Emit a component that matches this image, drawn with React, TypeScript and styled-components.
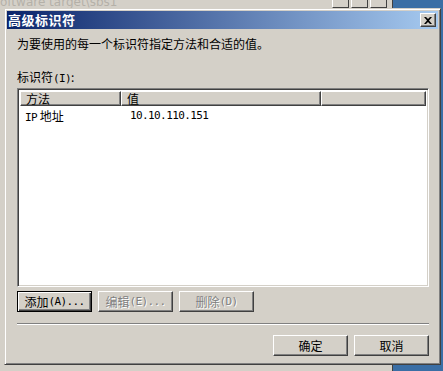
import React from 'react';
import styled, { createGlobalStyle } from 'styled-components';

const GlobalStyle = createGlobalStyle`
  html, body {
    margin: 0;
    padding: 0;
    background: #3a6ea5;
  }
  body {
    font-family: "Noto Sans CJK SC", "DejaVu Sans", sans-serif;
    font-size: 12px;
    color: #000;
  }
`;

const Desktop = styled.div`
  position: relative;
  width: 443px;
  height: 371px;
  overflow: hidden;
  background: #3a6ea5;
`;

// window behind the dialog
const BackWindow = styled.div`
  width: 392px;
  height: 371px;
  background: #d4d0c8;
  border-right: 1px solid #404040;
  display: flex;
  flex-direction: column;
`;

const BackTitle = styled.div`
  height: 8px;
  display: flex;
  align-items: flex-start;
  justify-content: space-between;
  background: #d4d0c8;
  overflow: hidden;
`;

const BackTitleText = styled.span`
  font-family: "DejaVu Sans", sans-serif;
  font-size: 12px;
  line-height: 12px;
  margin-top: -4px;
  color: #b4b0a8;
  white-space: nowrap;
`;

const BackButtons = styled.div`
  display: flex;
  gap: 2px;
  padding-right: 5px;
`;

const BackButton = styled.div`
  width: 15px;
  height: 7px;
  background: #d4d0c8;
  border-left: 1px solid #fff;
  border-right: 1px solid #404040;
  border-bottom: 1px solid #404040;
`;

const Dialog = styled.div`
  position: absolute;
  left: 4px;
  top: 8px;
  width: 437px;
  height: 357px;
  box-sizing: border-box;
  background: #d4d0c8;
  border-top: 1px solid #d4d0c8;
  border-left: 1px solid #d4d0c8;
  border-right: 1px solid #404040;
  border-bottom: 1px solid #404040;
  box-shadow: inset 1px 1px 0 #fff, inset -1px -1px 0 #808080;
  padding: 2px;
  display: flex;
  flex-direction: column;
`;

const TitleBar = styled.div`
  height: 18px;
  display: flex;
  align-items: center;
  justify-content: space-between;
  background: linear-gradient(to right, #0a246a, #a6caf0);
  padding: 0 2px 0 1px;
`;

const TitleText = styled.span`
  color: #fff;
  font-weight: bold;
  font-size: 13px;
  letter-spacing: 0.5px;
  line-height: 18px;
`;

const CloseButton = styled.div`
  width: 16px;
  height: 14px;
  box-sizing: border-box;
  background: #d4d0c8;
  border-top: 1px solid #fff;
  border-left: 1px solid #fff;
  border-right: 1px solid #404040;
  border-bottom: 1px solid #404040;
  box-shadow: inset -1px -1px 0 #808080;
  display: flex;
  align-items: center;
  justify-content: center;
`;

const Body = styled.div`
  flex: 1;
  display: flex;
  flex-direction: column;
  padding: 0 9px 0 10px;
`;

const Description = styled.div`
  margin-top: 7px;
  line-height: 16px;
`;

const Label = styled.div`
  margin-top: 17px;
  line-height: 16px;
`;

const ListBox = styled.div`
  margin-top: 1px;
  height: 199px;
  box-sizing: border-box;
  background: #fff;
  border-top: 1px solid #808080;
  border-left: 1px solid #808080;
  border-right: 1px solid #fff;
  border-bottom: 1px solid #fff;
  box-shadow: inset 1px 1px 0 #404040, inset -1px -1px 0 #d4d0c8;
  padding: 2px;
  display: flex;
  flex-direction: column;
`;

const HeaderRow = styled.div`
  display: flex;
  height: 15px;
`;

const HeaderCell = styled.div<{ $width?: number }>`
  ${({ $width }) => ($width ? `width: ${$width}px;` : 'flex: 1;')}
  box-sizing: border-box;
  background: #d4d0c8;
  border-top: 1px solid #fff;
  border-left: 1px solid #fff;
  border-right: 1px solid #404040;
  border-bottom: 1px solid #404040;
  box-shadow: inset -1px -1px 0 #808080;
  padding-left: 5px;
  line-height: 13px;
  overflow: hidden;
`;

const DataRow = styled.div`
  display: flex;
  margin-top: 2px;
  height: 16px;
  line-height: 16px;
`;

const DataCell = styled.div<{ $width?: number; $mono?: boolean }>`
  ${({ $width }) => ($width ? `width: ${$width}px;` : 'flex: 1;')}
  padding-left: ${({ $mono }) => ($mono ? '4px' : '5px')};
  font-family: ${({ $mono }) =>
    $mono ? '"DejaVu Sans Mono", "Liberation Mono", monospace' : 'inherit'};
  font-size: ${({ $mono }) => ($mono ? '11px' : '12px')};
  letter-spacing: ${({ $mono }) => ($mono ? '-0.6px' : '0')};
  white-space: nowrap;
`;

const ButtonRow = styled.div<{ $end?: boolean }>`
  display: flex;
  gap: 6px;
  justify-content: ${({ $end }) => ($end ? 'flex-end' : 'flex-start')};
`;

const Button = styled.div<{ $default?: boolean; $disabled?: boolean }>`
  width: 75px;
  height: 21px;
  box-sizing: border-box;
  background: #d4d0c8;
  display: flex;
  align-items: center;
  justify-content: center;
  line-height: 16px;
  color: ${({ $disabled }) => ($disabled ? '#808080' : '#000')};
  text-shadow: ${({ $disabled }) => ($disabled ? '1px 1px 0 #fff' : 'none')};
  border: 1px solid;
  border-color: ${({ $default }) =>
    $default ? '#000' : '#fff #404040 #404040 #fff'};
  box-shadow: ${({ $default }) =>
    $default
      ? 'inset 1px 1px 0 #fff, inset -1px -1px 0 #404040, inset -2px -2px 0 #808080'
      : 'inset -1px -1px 0 #808080'};
`;

const Separator = styled.div`
  margin-top: 11px;
  height: 0;
  border-top: 1px solid #808080;
  border-bottom: 1px solid #fff;
`;

const Gap = styled.div<{ $h: number }>`
  height: ${({ $h }) => $h}px;
`;

const Shortcut = styled.span`
  font-family: "DejaVu Sans Mono", "Liberation Mono", monospace;
  font-size: 11px;
  letter-spacing: -0.6px;
`;

const CloseIcon = () => (
  <svg width="8" height="7" viewBox="0 0 8 7">
    <path d="M0 0h2l2 2 2-2h2L5 3.5 8 7H6L4 5 2 7H0l3-3.5z" fill="#000" />
  </svg>
);

export default function App() {
  return (
    <>
      <GlobalStyle />
      <Desktop>
        <BackWindow>
          <BackTitle>
            <BackTitleText>oftware target\sbs1</BackTitleText>
            <BackButtons>
              <BackButton />
              <BackButton />
              <BackButton />
            </BackButtons>
          </BackTitle>
        </BackWindow>
        <Dialog>
          <TitleBar>
            <TitleText>高级标识符</TitleText>
            <CloseButton>
              <CloseIcon />
            </CloseButton>
          </TitleBar>
          <Body>
            <Description>为要使用的每一个标识符指定方法和合适的值。</Description>
            <Label>
              标识符<Shortcut>(I)</Shortcut>:
            </Label>
            <ListBox>
              <HeaderRow>
                <HeaderCell $width={101}>方法</HeaderCell>
                <HeaderCell $width={200}>值</HeaderCell>
                <HeaderCell />
              </HeaderRow>
              <DataRow>
                <DataCell $width={101}>
                  <Shortcut>IP</Shortcut> 地址
                </DataCell>
                <DataCell $mono>10.10.110.151</DataCell>
              </DataRow>
            </ListBox>
            <Gap $h={4} />
            <ButtonRow>
              <Button $default>
                添加<Shortcut>(A)...</Shortcut>
              </Button>
              <Button $disabled>
                编辑<Shortcut>(E)...</Shortcut>
              </Button>
              <Button $disabled>
                删除<Shortcut>(D)</Shortcut>
              </Button>
            </ButtonRow>
            <Separator />
            <Gap $h={10} />
            <ButtonRow $end>
              <Button>确定</Button>
              <Button>取消</Button>
            </ButtonRow>
          </Body>
        </Dialog>
      </Desktop>
    </>
  );
}
